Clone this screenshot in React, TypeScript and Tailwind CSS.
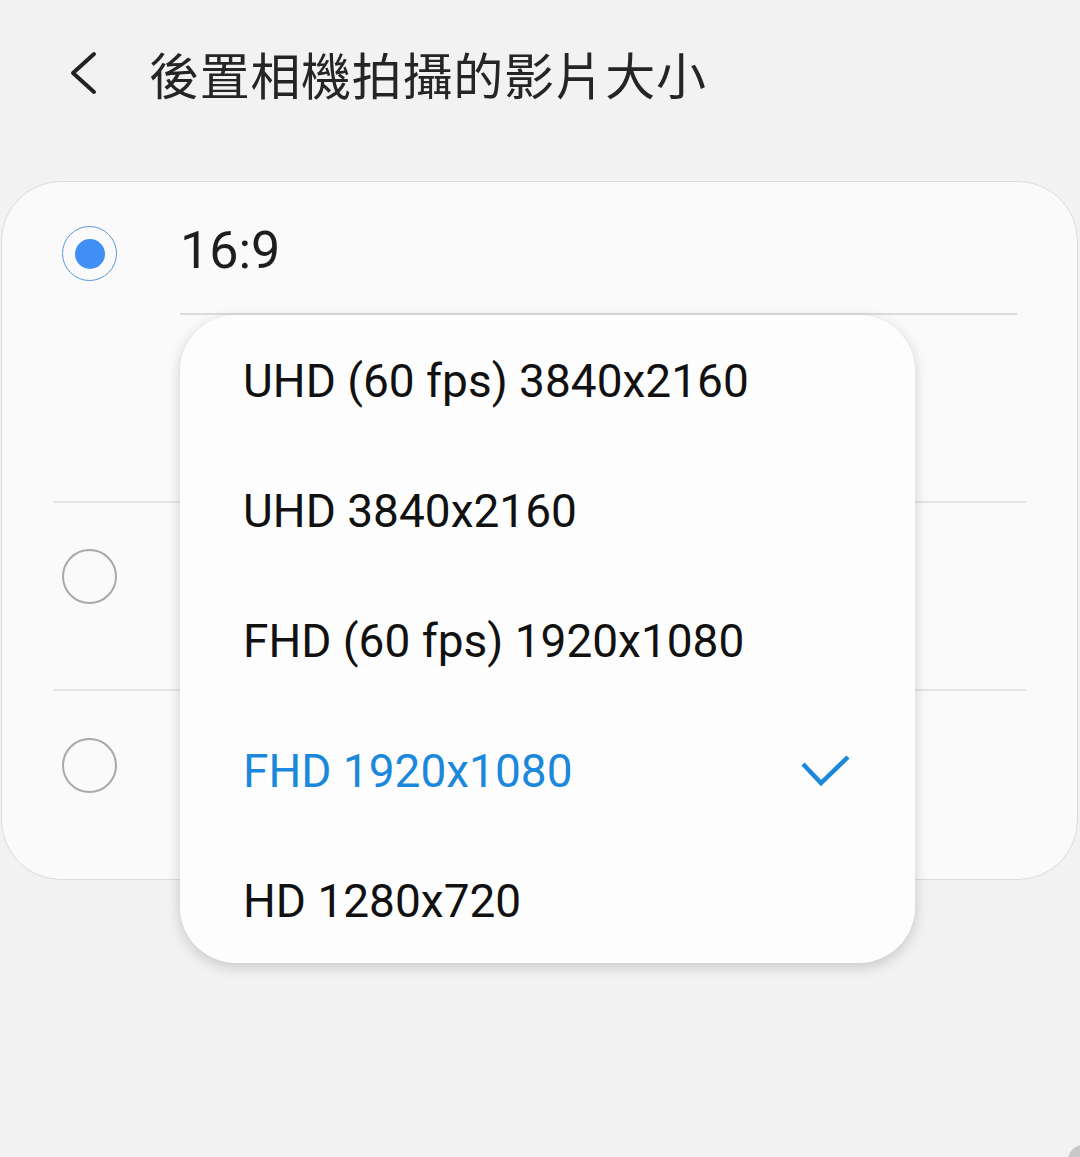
import React from "react";

const options = [
  { label: "UHD (60 fps) 3840x2160", selected: false },
  { label: "UHD 3840x2160", selected: false },
  { label: "FHD (60 fps) 1920x1080", selected: false },
  { label: "FHD 1920x1080", selected: true },
  { label: "HD 1280x720", selected: false },
];

function Radio({ checked }: { checked?: boolean }) {
  if (checked) {
    return (
      <div className="flex h-[55px] w-[55px] shrink-0 items-center justify-center rounded-full border-[1.5px] border-[#5b97d8]">
        <div className="h-[30px] w-[30px] rounded-full bg-[#3f8ff5]" />
      </div>
    );
  }
  return <div className="h-[55px] w-[55px] shrink-0 rounded-full border-2 border-[#a9a9a9]" />;
}

export default function App() {
  return (
    <div
      className="relative h-[1157px] w-[1080px] overflow-hidden bg-[#f2f2f2]"
      style={{ fontFamily: "Roboto, 'Noto Sans CJK TC', sans-serif" }}
    >
      <div className="flex h-[146px] items-center">
        <svg className="ml-[68px]" width="30" height="44" viewBox="0 0 30 44" fill="none">
          <path d="M26 3 L5 22 L26 41" stroke="#222" strokeWidth="4" strokeLinecap="round" strokeLinejoin="round" />
        </svg>
        <h1
          className="ml-[51px] text-[50px] leading-none tracking-[0.7px] text-[#252525]"
          style={{ fontFamily: "'Noto Sans CJK TC', sans-serif" }}
        >
          後置相機拍攝的影片大小
        </h1>
      </div>

      <div className="ml-px mr-[2px] mt-[35px] h-[699px] rounded-[60px] border border-[#dcdcdc] bg-[#fafafa]">
        <div className="flex h-[319px] pl-[60px] pt-[44px]">
          <Radio checked />
          <div className="ml-[63px] mr-[60px] flex-1">
            <div className="flex h-[55px] -translate-y-[3px] items-center text-[52px] text-[#1e1e1e]">16:9</div>
            <div className="mt-[32px] h-[2px] bg-[#dcdcdc]" />
          </div>
        </div>
        <div className="mx-[51px] h-[2px] bg-[#e6e6e6]" />
        <div className="flex h-[186px] pl-[60px] pt-[46px]">
          <Radio />
        </div>
        <div className="mx-[51px] h-[2px] bg-[#e6e6e6]" />
        <div className="flex pl-[60px] pt-[47px]">
          <Radio />
        </div>
      </div>

      <div className="absolute left-[180px] top-[315px] h-[648px] w-[735px] rounded-[56px] bg-[#fdfdfd] pt-px shadow-[0_4px_14px_rgba(0,0,0,0.18)]">
        {options.map((o) => (
          <div key={o.label} className="flex h-[130px] items-center pl-[63px] pr-[64px]">
            <span className={`flex-1 text-[46px] ${o.selected ? "text-[#1b88dc]" : "text-[#111]"}`}>{o.label}</span>
            {o.selected && (
              <svg width="50" height="36" viewBox="0 0 50 36" fill="none">
                <path d="M2 11 L20 30 L47 4" stroke="#1b88dc" strokeWidth="4.5" />
              </svg>
            )}
          </div>
        ))}
      </div>

      <div className="absolute left-[1068px] top-[1145px] h-[30px] w-[30px] rounded-full bg-[#c8c8c8]" />
    </div>
  );
}
